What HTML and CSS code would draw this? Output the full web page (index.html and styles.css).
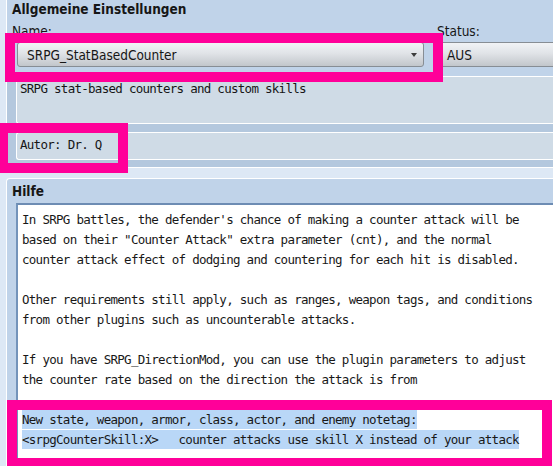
FILE: index.html
```html
<!DOCTYPE html>
<html lang="de">
<head>
    <meta charset="UTF-8">
    <title>Plugin-Einstellungen</title>
    <link rel="stylesheet" href="styles.css">
</head>
<body>
    <section class="group general">
        <div class="group-head">
            <h3>Allgemeine Einstellungen</h3>
            <div class="fields">
                <div class="field">
                    <div class="caption">Name:</div>
                    <div class="combo name-combo"><span>SRPG_StatBasedCounter</span><i class="arrow"></i></div>
                </div>
                <div class="field">
                    <div class="caption">Status:</div>
                    <div class="combo status-combo"><span>AUS</span></div>
                </div>
            </div>
        </div>
        <div class="group-body">
            <div class="box desc">SRPG stat-based counters and custom skills</div>
            <div class="box author">Autor: Dr. Q</div>
        </div>
    </section>

    <section class="group help">
        <h3>Hilfe</h3>
        <div class="textarea">In SRPG battles, the defender's chance of making a counter attack will be
based on their "Counter Attack" extra parameter (cnt), and the normal
counter attack effect of dodging and countering for each hit is disabled.

Other requirements still apply, such as ranges, weapon tags, and conditions
from other plugins such as uncounterable attacks.

If you have SRPG_DirectionMod, you can use the plugin parameters to adjust
the counter rate based on the direction the attack is from

<span class="sel">New state, weapon, armor, class, actor, and enemy notetag:</span>
<span class="sel">&lt;srpgCounterSkill:X&gt;   counter attacks use skill X instead of your attack</span></div>
    </section>

    <!-- highlight frames -->
    <div class="mark mark-name"></div>
    <div class="mark mark-author"></div>
    <div class="mark mark-notetag"></div>
</body>
</html>
```

FILE: styles.css
```css
html, body { margin: 0; }
body {
    position: relative;
    width: 553px;
    height: 466px;
    overflow: hidden;
    background: #dde8f5;
    font-family: "DejaVu Sans", "Liberation Sans", sans-serif;
    font-stretch: condensed;
    font-size: 13px;
    color: #161616;
}
h3 { margin: 0; font-size: 13.5px; line-height: 17px; font-weight: bold; }

.group { margin-left: 6px; border-left: 1px solid #fff; background: #c0d3e9; overflow: hidden; }
.general { border-bottom: 1px solid #fff; }
.group-head { padding: 1px 0 9px 5px; }
.fields { display: grid; grid-template-columns: 412px 1fr; column-gap: 13px; margin-top: 5px; }
.caption { line-height: 17px; font-size: 13.5px; }

.combo {
    display: flex;
    align-items: center;
    box-sizing: border-box;
    height: 25px;
    margin-top: 2px;
    border: 1px solid #878d94;
    border-radius: 3px;
    background: linear-gradient(#f1f3f6, #e0e3e7 45%, #c2c6cb);
    font-size: 13.5px;
}
.name-combo { margin-left: 5px; padding: 0 6px 0 9px; }
.name-combo span { flex: 1; }
.status-combo { width: 200px; margin-left: 3px; padding-left: 6px; }
.arrow { width: 0; height: 0; border-left: 3px solid transparent; border-right: 3px solid transparent; border-top: 4px solid #3d3d3d; }

.group-body { background: #b4c8de; padding: 0 0 7px 9px; }
.box {
    box-sizing: border-box;
    border: 1px solid #fff;
    border-right: none;
    border-radius: 3px 0 0 3px;
    background: #cfdbe6;
    font-family: "DejaVu Sans Mono", monospace;
    font-stretch: normal;
    font-size: 12.5px;
    letter-spacing: -0.72px;
    line-height: 16px;
    padding: 4px 3px;
}
.desc { height: 48px; margin-bottom: 8px; }
.author { height: 28px; }

.help { margin-top: 10px; height: 300px; border-top: 1px solid #fff; border-top-left-radius: 4px; }
.help h3 { padding: 4px 0 0 5px; }
.textarea {
    margin: 3px 0 0 9px;
    height: 280px;
    border-top: 2px solid #6d8cb3;
    border-left: 2px solid #7393ba;
    background: #fff;
    padding: 5px 0 0 4px;
    white-space: pre;
    font-family: "DejaVu Sans Mono", monospace;
    font-stretch: normal;
    font-size: 12.5px;
    letter-spacing: -0.72px;
    line-height: 20px;
    color: #181818;
}
.sel { background: #b9d7f7; padding: 2px 0; }

.mark { position: absolute; box-sizing: border-box; border: 10px solid #ff0099; }
.mark-name { left: 5px; top: 33px; width: 438px; height: 49px; }
.mark-author { left: -2px; top: 123px; width: 130px; height: 50px; }
.mark-notetag { left: 7px; top: 400px; width: 545px; height: 68px; }
```
